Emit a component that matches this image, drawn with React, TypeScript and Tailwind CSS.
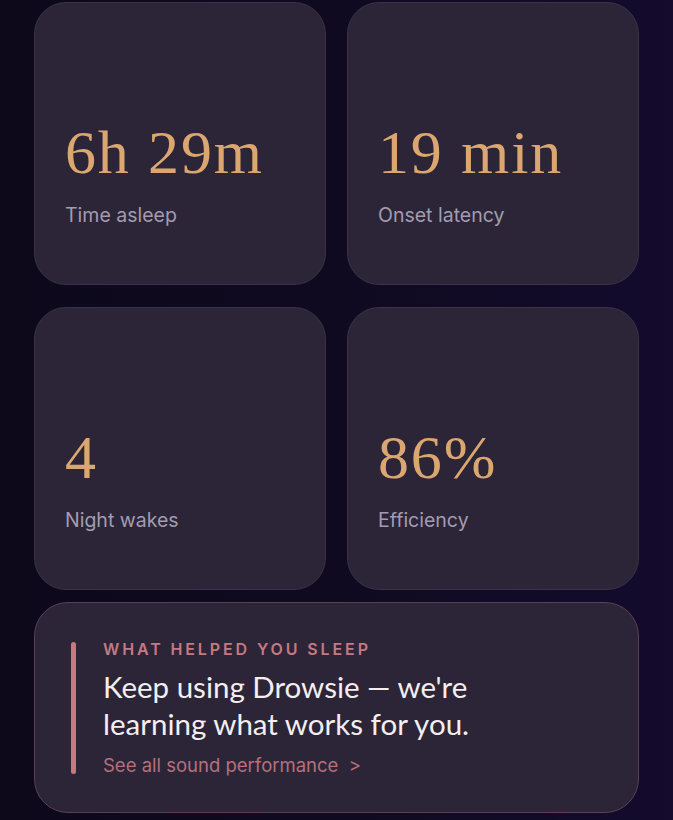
import React from "react";

const stats = [
  { value: "6h 29m", label: "Time asleep" },
  { value: "19 min", label: "Onset latency" },
  { value: "4", label: "Night wakes" },
  { value: "86%", label: "Efficiency" },
];

function StatCard({ value, label }: { value: string; label: string }) {
  return (
    <div className="h-[283px] rounded-[32px] bg-[#2c2538] border border-[#3a3246] flex flex-col justify-end px-[30px] pb-[57px]">
      <div className="text-[62px] leading-[62px] text-[#dba670] font-['Liberation_Serif',serif] tracking-[0.03em]">
        {value}
      </div>
      <div className="mt-[20px] text-[19.5px] leading-[24px] text-[#a39cb1] font-['Inter',sans-serif]">
        {label}
      </div>
    </div>
  );
}

export default function App() {
  return (
    <div className="w-[673px] h-[820px] overflow-hidden bg-gradient-to-r from-[#0d091b] via-[#0f0a20] to-[#140b2d] px-[34px] pt-[2px]">
      <div className="grid grid-cols-2 gap-x-[21px] gap-y-[22px]">
        {stats.map((s) => (
          <StatCard key={s.label} value={s.value} label={s.label} />
        ))}
      </div>
      <div className="mt-[12px] h-[211px] rounded-[34px] bg-[#2c2538] border border-[#5b4053] flex pl-[36px] pt-[36px] pb-[37px]">
        <div className="w-[5px] rounded-full bg-[#c67981] mt-[3px] mb-[1px]" />
        <div className="ml-[27px] flex flex-col">
          <div className="text-[16px] leading-[20px] font-semibold tracking-[0.18em] text-[#c47a83] font-['Inter',sans-serif]">
            WHAT HELPED YOU SLEEP
          </div>
          <div className="mt-[9px] text-[29.5px] leading-[37px] text-[#f4eef0] font-['Lato',sans-serif]">
            Keep using Drowsie — we're
            <br />
            learning what works for you.
          </div>
          <div className="mt-[12px] text-[18.5px] leading-[22px] text-[#b7707b] font-['Inter',sans-serif]">
            See all sound performance&nbsp;&nbsp;&gt;
          </div>
        </div>
      </div>
    </div>
  );
}
